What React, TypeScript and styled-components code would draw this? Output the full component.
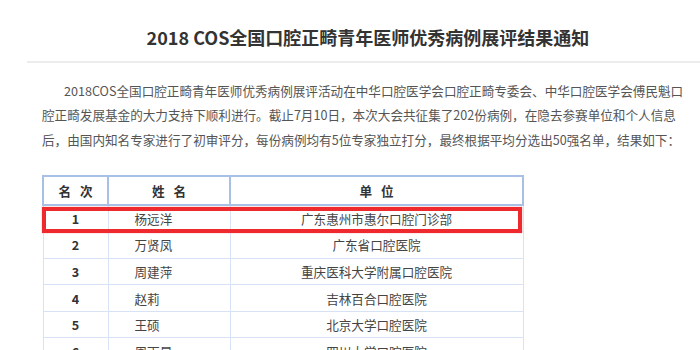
import styled, { createGlobalStyle } from 'styled-components'

const GlobalStyle = createGlobalStyle`
  html, body {
    margin: 0;
    padding: 0;
    background: #fff;
    overflow: hidden;
  }
  body {
    font-family: "Noto Sans CJK SC", "Noto Sans", sans-serif;
    color: #444;
  }
`

type Winner = { rank: number; name: string; unit: string }

const winners: Winner[] = [
  { rank: 1, name: '杨远洋', unit: '广东惠州市惠尔口腔门诊部' },
  { rank: 2, name: '万贤凤', unit: '广东省口腔医院' },
  { rank: 3, name: '周建萍', unit: '重庆医科大学附属口腔医院' },
  { rank: 4, name: '赵莉', unit: '吉林百合口腔医院' },
  { rank: 5, name: '王硕', unit: '北京大学口腔医院' },
  { rank: 6, name: '周雨晨', unit: '四川大学口腔医院' },
]

function App() {
  return (
    <>
      <GlobalStyle />
      <Article>
        <Title>2018 COS全国口腔正畸青年医师优秀病例展评结果通知</Title>
        <Intro>
          <Line $indent>2018COS全国口腔正畸青年医师优秀病例展评活动在中华口腔医学会口腔正畸专委会、中华口腔医学会傅民魁口</Line>
          <Line>腔正畸发展基金的大力支持下顺利进行。截止7月10日，本次大会共征集了202份病例，在隐去参赛单位和个人信息</Line>
          <Line>后，由国内知名专家进行了初审评分，每份病例均有5位专家独立打分，最终根据平均分选出50强名单，结果如下：</Line>
        </Intro>
        <TableWrap>
          <ResultTable>
            <colgroup>
              <col style={{ width: 65 }} />
              <col style={{ width: 122 }} />
              <col style={{ width: 293 }} />
            </colgroup>
            <thead>
              <tr>
                <HeadCell>名 次</HeadCell>
                <HeadCell>姓 名</HeadCell>
                <HeadCell>单 位</HeadCell>
              </tr>
            </thead>
            <tbody>
              {winners.map((w) => (
                <tr key={w.rank}>
                  <RankCell>{w.rank}</RankCell>
                  <NameCell>{w.name}</NameCell>
                  <UnitCell>{w.unit}</UnitCell>
                </tr>
              ))}
            </tbody>
          </ResultTable>
          <Highlight />
        </TableWrap>
      </Article>
    </>
  )
}

export default App

const Article = styled.div`
  width: 682px;
  margin-left: 27px;
  padding-top: 24px;
`

const Title = styled.h1`
  margin: 0;
  padding-bottom: 11px;
  border-bottom: 2px solid #ececec;
  font-size: 18px;
  line-height: 26px;
  font-weight: 700;
  color: #333;
  text-align: center;
`

const Intro = styled.div`
  margin: 15.5px 0 0 15px;
  font-size: 12.6px;
  line-height: 24.5px;
  color: #555;
`

const Line = styled.div<{ $indent?: boolean }>`
  white-space: nowrap;
  padding-left: ${(p) => (p.$indent ? '22px' : '0')};
`

const TableWrap = styled.div`
  position: relative;
  width: 480px;
  margin: 23px 0 0 15px;
`

const ResultTable = styled.table`
  width: 480px;
  border-collapse: collapse;
  table-layout: fixed;
  font-size: 12.6px;
  color: #444;

  & tbody td {
    height: 26.6px;
    padding: 0;
    border: 1.5px solid #d7e2f5;
    box-sizing: border-box;
  }
`

const HeadCell = styled.th`
  height: 29px;
  padding: 0;
  border: 2px solid #a9c0e6;
  font-weight: 700;
  color: #333;
  word-spacing: 6px;
  text-align: center;
  box-sizing: border-box;
`

const RankCell = styled.td`
  text-align: center;
  font-weight: 700;
  color: #333;
`

const NameCell = styled.td`
  text-align: left;
  padding-left: 26px !important;
`

const UnitCell = styled.td`
  text-align: center;
`

const Highlight = styled.div`
  position: absolute;
  left: 0;
  top: 31.5px;
  width: 480px;
  height: 26.6px;
  border: 4.5px solid #ef2a2f;
  box-sizing: border-box;
  box-shadow: 0 0 1px rgba(239, 42, 47, 0.6);
  pointer-events: none;
`
